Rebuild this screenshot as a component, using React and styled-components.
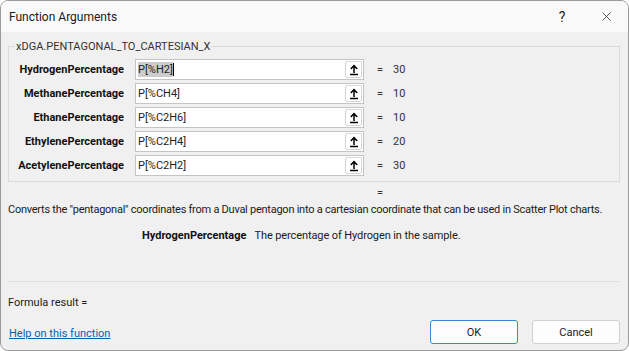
import React from 'react';
import styled, { createGlobalStyle } from 'styled-components';
import { X } from 'lucide-react';

const Global = createGlobalStyle`
  html, body {
    margin: 0;
    padding: 0;
    background: #ffffff;
  }
  * {
    box-sizing: border-box;
  }
`;

const Window = styled.div`
  width: 629px;
  height: 351px;
  display: flex;
  flex-direction: column;
  border: 1px solid #9a9a9a;
  border-radius: 8px;
  overflow: hidden;
  background: #f0f0f0;
  font-family: Roboto, "Liberation Sans", sans-serif;
  color: #1b1b1b;
`;

const TitleBar = styled.div`
  height: 31px;
  flex-shrink: 0;
  display: flex;
  align-items: center;
  padding-left: 8px;
  background: #f9f9f9;
  font-size: 12px;
`;

const Title = styled.div`
  flex: 1;
`;

const TitleButton = styled.div`
  width: 44px;
  height: 31px;
  display: flex;
  align-items: center;
  justify-content: center;
  font-size: 14px;
  color: #222;
`;

const Content = styled.div`
  flex: 1;
  display: flex;
  flex-direction: column;
  padding: 0 8px 6px 7px;
`;

const Group = styled.fieldset`
  margin: 8px 0 0 0;
  padding: 6px 6px 5px 6px;
  border: 1px solid #dadada;
  min-width: 0;
`;

const Legend = styled.legend`
  padding: 0 1px;
  font-size: 11px;
  line-height: 13px;
  color: #333;
`;

const ArgRow = styled.div`
  display: grid;
  grid-template-columns: 109px 229px 7px auto;
  column-gap: 11px;
  align-items: center;
  height: 21px;
  & + & {
    margin-top: 3px;
  }
`;

const ArgLabel = styled.div`
  text-align: right;
  font-weight: bold;
  font-size: 11px;
  color: #111;
  white-space: nowrap;
`;

const InputBox = styled.div`
  height: 21px;
  display: flex;
  align-items: center;
  background: #fff;
  border: 1px solid #c4c4c4;
  padding: 0 1px 0 2px;
`;

const InputText = styled.div`
  flex: 1;
  display: flex;
  align-items: center;
  font-size: 11px;
  color: #222;
`;

const Selected = styled.span`
  background: #cccccc;
  padding: 1px 0;
`;

const Caret = styled.span`
  display: inline-block;
  width: 1px;
  height: 13px;
  background: #000;
`;

const Collapse = styled.div`
  width: 17px;
  height: 17px;
  display: flex;
  align-items: center;
  justify-content: center;
  border: 1px solid #d6d6d6;
  border-radius: 2px;
  background: #fff;
`;

const Equals = styled.div`
  font-size: 11px;
  color: #333;
  margin-left: 2px;
`;

const Value = styled.div`
  font-size: 11px;
  color: #333;
`;

const ResultEquals = styled.div`
  margin: 4px 0 0 369px;
  font-size: 11px;
  line-height: 14px;
  color: #333;
`;

const Description = styled.div`
  margin-top: 3px;
  font-size: 11px;
  letter-spacing: -0.25px;
  line-height: 14px;
  white-space: nowrap;
`;

const HelpRow = styled.div`
  margin-top: 12px;
  padding-left: 134px;
  display: flex;
  gap: 8px;
  font-size: 11px;
  line-height: 14px;
`;

const HelpName = styled.span`
  font-weight: bold;
  color: #111;
`;

const HelpText = styled.span`
  letter-spacing: -0.1px;
`;

const Separator = styled.div`
  margin-top: 38px;
  border-top: 1px solid #dedede;
`;

const Formula = styled.div`
  margin-top: 14px;
  font-size: 11px;
  line-height: 14px;
`;

const Footer = styled.div`
  margin-top: 10px;
  display: flex;
  align-items: center;
`;

const HelpLink = styled.a`
  flex: 1;
  font-size: 11px;
  color: #0063b1;
  text-decoration: underline;
  padding-left: 1px;
  padding-top: 3px;
`;

const Button = styled.button`
  width: 88px;
  height: 24px;
  margin-left: ${(p) => (p.$primary ? '0' : '14px')};
  background: #fdfdfd;
  border: 1px solid ${(p) => (p.$primary ? '#3c86d0' : '#d0d0d0')};
  border-radius: 3px;
  font-family: Roboto, "Liberation Sans", sans-serif;
  font-size: 11px;
  color: #1b1b1b;
`;

const UploadIcon = () => (
  <svg width="10" height="12" viewBox="0 0 10 12">
    <path d="M5 9V2M1.8 5L5 1.6L8.2 5M1 10.6H9" stroke="#000" strokeWidth="1.5" fill="none" />
  </svg>
);

const args = [
  { name: 'HydrogenPercentage', ref: 'P[%H2]', value: '30', active: true },
  { name: 'MethanePercentage', ref: 'P[%CH4]', value: '10' },
  { name: 'EthanePercentage', ref: 'P[%C2H6]', value: '10' },
  { name: 'EthylenePercentage', ref: 'P[%C2H4]', value: '20' },
  { name: 'AcetylenePercentage', ref: 'P[%C2H2]', value: '30' },
];

export default function App() {
  return (
    <>
      <Global />
      <Window>
        <TitleBar>
          <Title>Function Arguments</Title>
          <TitleButton>?</TitleButton>
          <TitleButton>
            <X size={15} strokeWidth={1.2} />
          </TitleButton>
        </TitleBar>
        <Content>
          <Group>
            <Legend>xDGA.PENTAGONAL_TO_CARTESIAN_X</Legend>
            {args.map((a) => (
              <ArgRow key={a.name}>
                <ArgLabel>{a.name}</ArgLabel>
                <InputBox>
                  <InputText>
                    {a.active ? (
                      <>
                        <Selected>{a.ref}</Selected>
                        <Caret />
                      </>
                    ) : (
                      a.ref
                    )}
                  </InputText>
                  <Collapse>
                    <UploadIcon />
                  </Collapse>
                </InputBox>
                <Equals>=</Equals>
                <Value>{a.value}</Value>
              </ArgRow>
            ))}
          </Group>
          <ResultEquals>=</ResultEquals>
          <Description>
            Converts the "pentagonal" coordinates from a Duval pentagon into a cartesian coordinate that can be used in Scatter Plot charts.
          </Description>
          <HelpRow>
            <HelpName>HydrogenPercentage</HelpName>
            <HelpText>The percentage of Hydrogen in the sample.</HelpText>
          </HelpRow>
          <Separator />
          <Formula>Formula result =</Formula>
          <Footer>
            <HelpLink href="#">Help on this function</HelpLink>
            <Button $primary>OK</Button>
            <Button>Cancel</Button>
          </Footer>
        </Content>
      </Window>
    </>
  );
}
